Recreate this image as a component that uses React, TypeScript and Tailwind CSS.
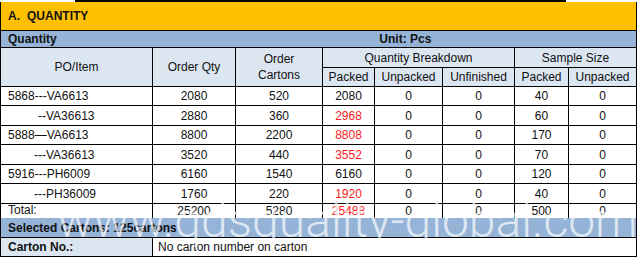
import React from "react";

const cols = "grid grid-cols-[152px_83px_87px_52px_68px_72px_54px_68px]";

type Row = {
  item: string;
  pad: string;
  qty: string;
  cartons: string;
  packed: string;
  red?: boolean;
  sample: string;
  h: string;
};

const rows: Row[] = [
  { item: "5868---VA6613", pad: "pl-[7px]", qty: "2080", cartons: "520", packed: "2080", sample: "40", h: "h-[19px]" },
  { item: "--VA36613", pad: "pl-[37px]", qty: "2880", cartons: "360", packed: "2968", red: true, sample: "60", h: "h-[20px]" },
  { item: "5888—VA6613", pad: "pl-[7px]", qty: "8800", cartons: "2200", packed: "8808", red: true, sample: "170", h: "h-[19px]" },
  { item: "---VA36613", pad: "pl-[33px]", qty: "3520", cartons: "440", packed: "3552", red: true, sample: "70", h: "h-[20px]" },
  { item: "5916---PH6009", pad: "pl-[7px]", qty: "6160", cartons: "1540", packed: "6160", sample: "120", h: "h-[19px]" },
  { item: "---PH36009", pad: "pl-[33px]", qty: "1760", cartons: "220", packed: "1920", red: true, sample: "40", h: "h-[20px]" },
];

function Cell({ children, className = "" }: { children?: React.ReactNode; className?: string }) {
  return (
    <div className={`flex items-center justify-center border-r border-b border-black ${className}`}>
      {children}
    </div>
  );
}

export default function App() {
  return (
    <div className="relative w-[638px] h-[259px] overflow-hidden bg-white font-['Liberation_Sans',Arial,sans-serif] text-[12px] text-[#111]">
      <div className="ml-[75px] w-[491px] h-[2px] bg-black" />
      <div className="w-[637px] border-l border-black">
        <div className="flex items-center h-[29px] bg-[#FFC000] border-b border-r border-black pl-[7px] font-bold">
          <span>A.</span>
          <span className="ml-[7px]">QUANTITY</span>
        </div>
        <div className="flex items-center h-[17px] bg-[#95B3D7] border-b border-r border-black font-bold leading-none">
          <div className="w-[174px] pl-[7px]">Quantity</div>
          <div className="w-[462px] text-center">Unit: Pcs</div>
        </div>

        <div className={`${cols} grid-rows-[20px_19px] bg-[#DCE6F1] leading-[16px]`}>
          <Cell className="row-span-2">PO/Item</Cell>
          <Cell className="row-span-2">Order Qty</Cell>
          <Cell className="row-span-2 text-center">
            Order
            <br />
            Cartons
          </Cell>
          <Cell className="col-span-3">Quantity Breakdown</Cell>
          <Cell className="col-span-2">Sample Size</Cell>
          <Cell>Packed</Cell>
          <Cell>Unpacked</Cell>
          <Cell>Unfinished</Cell>
          <Cell>Packed</Cell>
          <Cell>Unpacked</Cell>
        </div>

        {rows.map((r) => (
          <div key={r.item} className={`${cols} ${r.h}`}>
            <Cell className={`!justify-start ${r.pad}`}>{r.item}</Cell>
            <Cell>{r.qty}</Cell>
            <Cell>{r.cartons}</Cell>
            <Cell className={r.red ? "text-[#FF1A1A]" : ""}>{r.packed}</Cell>
            <Cell>0</Cell>
            <Cell>0</Cell>
            <Cell>{r.sample}</Cell>
            <Cell>0</Cell>
          </div>
        ))}

        <div className={`${cols} h-[14px] overflow-hidden leading-[15px]`}>
          {["Total:", "25200", "5280", "25488", "0", "0", "500", "0"].map((v, i) => (
            <div
              key={i}
              className={`h-[16px] border-r border-black ${i === 0 ? "pl-[7px] leading-[13px]" : "text-center"} ${i === 3 ? "text-[#FF1A1A]" : ""}`}
            >
              {v}
            </div>
          ))}
        </div>

        <div className="flex items-center h-[20px] bg-[#95B3D7] border-b border-r border-black pl-[7px] font-bold">
          Selected Cartons: 125cartons
        </div>
        <div className="flex h-[19px] border-b border-r border-black">
          <div className="flex items-center w-[152px] bg-[#DCE6F1] border-r border-black pl-[7px] font-bold">
            Carton No.:
          </div>
          <div className="flex items-center pl-[5px]">No carton number on carton</div>
        </div>
      </div>

      <div className="absolute left-[57px] top-[197px] font-['Roboto',sans-serif] font-light text-[48px] leading-none text-white/70 whitespace-nowrap pointer-events-none select-none">
        www.qdsquality-global.com
      </div>
    </div>
  );
}
